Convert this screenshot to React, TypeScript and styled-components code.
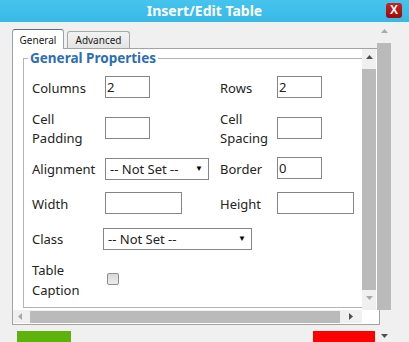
import React from "react";
import styled, { createGlobalStyle } from "styled-components";

const GlobalStyle = createGlobalStyle`
  html, body {
    margin: 0;
    padding: 0;
  }
  body {
    width: 409px;
    height: 342px;
    overflow: hidden;
    background: #f0f0f0;
    font-family: "Noto Sans", "Open Sans", sans-serif;
  }
`;

type Dir = "up" | "down" | "left" | "right";

const arrowPoints: Record<Dir, string> = {
  up: "0,4 7,4 3.5,0",
  down: "0,0 7,0 3.5,4",
  left: "4,0 4,7 0,3.5",
  right: "0,0 0,7 4,3.5",
};

function Arrow({ dir, dark }: { dir: Dir; dark?: boolean }) {
  const vertical = dir === "up" || dir === "down";
  return (
    <svg width={vertical ? 7 : 4} height={vertical ? 4 : 7}>
      <polygon points={arrowPoints[dir]} fill={dark ? "#505050" : "#a9a9a9"} />
    </svg>
  );
}

export default function App() {
  return (
    <>
      <GlobalStyle />
      <Window>
        <TitleBar>
          <Title>Insert/Edit Table</Title>
          <CloseButton>X</CloseButton>
        </TitleBar>
        <Body>
          <Main>
            <Tabs>
              <Tab $active>General</Tab>
              <Tab>Advanced</Tab>
            </Tabs>
            <Panel>
              <Viewport>
                <Fieldset>
                  <Legend>General Properties</Legend>
                  <FormGrid>
                    <Label>Columns</Label>
                    <TextBox $width={45} defaultValue="2" />
                    <Label>Rows</Label>
                    <TextBox $width={45} defaultValue="2" />

                    <Label>
                      Cell
                      <br />
                      Padding
                    </Label>
                    <TextBox $width={45} />
                    <Label>
                      Cell
                      <br />
                      Spacing
                    </Label>
                    <TextBox $width={45} />

                    <Label>Alignment</Label>
                    <SelectWrap $width={104}>
                      <Select>
                        <option>-- Not Set --</option>
                      </Select>
                      <SelectArrow>▼</SelectArrow>
                    </SelectWrap>
                    <Label>Border</Label>
                    <TextBox $width={45} defaultValue="0" />

                    <Label>Width</Label>
                    <TextBox $width={77} />
                    <Label>Height</Label>
                    <TextBox $width={77} />

                    <Label>Class</Label>
                    <SelectWrap $width={149} $shift={-2} $span>
                      <Select>
                        <option>-- Not Set --</option>
                      </Select>
                      <SelectArrow>▼</SelectArrow>
                    </SelectWrap>

                    <Label>
                      Table
                      <br />
                      Caption
                    </Label>
                    <CheckBox />
                  </FormGrid>
                </Fieldset>
              </Viewport>
              <VScroll>
                <ArrowCell $h={16}>
                  <Arrow dir="up" dark />
                </ArrowCell>
                <VThumb $h={221} />
                <ArrowCell $h={16}>
                  <Arrow dir="down" />
                </ArrowCell>
              </VScroll>
              <HScroll>
                <HArrowCell $w={14}>
                  <Arrow dir="left" />
                </HArrowCell>
                <HThumb />
                <HArrowCell>
                  <Arrow dir="right" dark />
                </HArrowCell>
              </HScroll>
            </Panel>
            <Buttons>
              <ActionButton $color="#5db30b" $width={54} />
              <ActionButton $color="#ff0000" $width={62} />
            </Buttons>
          </Main>
          <OuterScroll>
            <ArrowCell $h={17}>
              <Arrow dir="up" />
            </ArrowCell>
            <VThumb $h={267} />
            <ArrowCell $h={20} $mt={16}>
              <Arrow dir="down" dark />
            </ArrowCell>
          </OuterScroll>
        </Body>
      </Window>
    </>
  );
}

const Window = styled.div`
  width: 409px;
  height: 342px;
  display: flex;
  flex-direction: column;
  overflow: hidden;
`;

const TitleBar = styled.div`
  height: 22px;
  flex: none;
  background: linear-gradient(#46c4ee, #37b8e5);
  display: flex;
  align-items: center;
  justify-content: center;
  position: relative;
`;

const Title = styled.div`
  color: #ffffff;
  font-weight: bold;
  font-size: 14px;
  line-height: 22px;
`;

const CloseButton = styled.div`
  position: absolute;
  left: 386px;
  top: 3px;
  width: 16px;
  height: 15px;
  border-radius: 3px;
  background: linear-gradient(#c82222, #9c0b0b);
  color: #ffffff;
  font-family: "Liberation Sans", Arial, sans-serif;
  font-weight: bold;
  font-size: 12px;
  line-height: 15px;
  text-align: center;
`;

const Body = styled.div`
  flex: 1;
  display: flex;
`;

const Main = styled.div`
  width: 377px;
  padding: 7px 0 0 12px;
  box-sizing: border-box;
  display: flex;
  flex-direction: column;
`;

const Tabs = styled.div`
  display: flex;
  align-items: flex-end;
  height: 19px;
  gap: 3px;
`;

const Tab = styled.div<{ $active?: boolean }>`
  box-sizing: border-box;
  height: ${(p) => (p.$active ? "20px" : "17px")};
  margin-bottom: ${(p) => (p.$active ? "-1px" : "0")};
  width: ${(p) => (p.$active ? "52px" : "63px")};
  position: relative;
  z-index: ${(p) => (p.$active ? 1 : 0)};
  border: 1px solid ${(p) => (p.$active ? "#98a4b0" : "#a8a8a8")};
  border-top-color: ${(p) => (p.$active ? "#5d6e80" : "#a8a8a8")};
  border-bottom: none;
  border-radius: 3px 3px 0 0;
  background: ${(p) => (p.$active ? "#ffffff" : "linear-gradient(#f2f2f2, #e4e4e4)")};
  font-size: 10px;
  color: #1a1a1a;
  text-align: center;
  line-height: ${(p) => (p.$active ? "20px" : "16px")};
`;

const Panel = styled.div`
  box-sizing: border-box;
  width: 368px;
  height: 277px;
  border: 1px solid #a3a3a3;
  background: #ffffff;
  display: grid;
  grid-template-columns: 349px 14px;
  grid-template-rows: 261px 13px;
`;

const Viewport = styled.div`
  overflow: hidden;
`;

const Fieldset = styled.fieldset`
  box-sizing: border-box;
  margin: 0 0 0 10px;
  width: 360px;
  height: 259px;
  padding: 4px 0 0 8px;
  border: 1px solid #b4b4b4;
`;

const Legend = styled.legend`
  padding: 0 2px;
  margin-left: -4px;
  color: #2c6db6;
  font-weight: bold;
  font-size: 13.5px;
  line-height: 18px;
`;

const FormGrid = styled.div`
  display: grid;
  grid-template-columns: 73px 115px 57px 1fr;
  grid-template-rows: 32px 49px 32px 38px 32px 50px;
  align-items: center;
`;

const Label = styled.div`
  padding-top: 3px;
  font-size: 13px;
  line-height: 19.5px;
  color: #242424;
`;

const TextBox = styled.input<{ $width: number }>`
  box-sizing: border-box;
  width: ${(p) => p.$width}px;
  height: 22px;
  margin: 0;
  padding: 0 1px;
  border: 1px solid #858585;
  border-radius: 0;
  outline: none;
  font-family: "Noto Sans", sans-serif;
  font-size: 13px;
  color: #222222;
  background: #ffffff;
`;

const SelectWrap = styled.div<{ $width: number; $shift?: number; $span?: boolean }>`
  position: relative;
  width: ${(p) => p.$width}px;
  height: 22px;
  margin-left: ${(p) => p.$shift ?? 0}px;
  grid-column: ${(p) => (p.$span ? "2 / 5" : "auto")};
`;

const Select = styled.select`
  appearance: none;
  box-sizing: border-box;
  width: 100%;
  height: 22px;
  margin: 0;
  padding: 0 0 0 4px;
  border: 1px solid #858585;
  border-radius: 0;
  background: #ffffff;
  font-family: "Noto Sans", sans-serif;
  font-size: 13px;
  color: #222222;
  outline: none;
`;

const SelectArrow = styled.span`
  position: absolute;
  right: 6px;
  top: 0;
  line-height: 22px;
  font-size: 8px;
  color: #000000;
  pointer-events: none;
`;

const CheckBox = styled.div`
  box-sizing: border-box;
  width: 12px;
  height: 12px;
  margin-left: 2px;
  border: 1px solid #8e8e8e;
  border-radius: 2px;
  background: linear-gradient(#d9d9d9, #ececec);
`;

const VScroll = styled.div`
  background: #f0f0f0;
  display: flex;
  flex-direction: column;
  align-items: center;
`;

const ArrowCell = styled.div<{ $h: number; $mt?: number }>`
  height: ${(p) => p.$h}px;
  margin-top: ${(p) => p.$mt ?? 0}px;
  width: 14px;
  display: flex;
  align-items: center;
  justify-content: center;
  flex: none;
`;

const VThumb = styled.div<{ $h: number }>`
  width: 14px;
  height: ${(p) => p.$h}px;
  margin-top: 4px;
  background: #bababa;
  flex: none;
`;

const HScroll = styled.div`
  background: #f0f0f0;
  display: flex;
  align-items: center;
`;

const HArrowCell = styled.div<{ $w?: number }>`
  width: ${(p) => (p.$w ? `${p.$w}px` : "auto")};
  flex: ${(p) => (p.$w ? "none" : "1")};
  height: 13px;
  display: flex;
  align-items: center;
  justify-content: center;
`;

const HThumb = styled.div`
  width: 310px;
  height: 12px;
  margin: 1px 0 0 3px;
  background: #bababa;
`;

const Buttons = styled.div`
  display: flex;
  justify-content: space-between;
  width: 368px;
  box-sizing: border-box;
  padding: 0 5px;
  margin-top: 6px;
`;

const ActionButton = styled.div<{ $color: string; $width: number }>`
  width: ${(p) => p.$width}px;
  height: 14px;
  background: ${(p) => p.$color};
`;

const OuterScroll = styled.div`
  width: 14px;
  display: flex;
  flex-direction: column;
  align-items: center;
`;
